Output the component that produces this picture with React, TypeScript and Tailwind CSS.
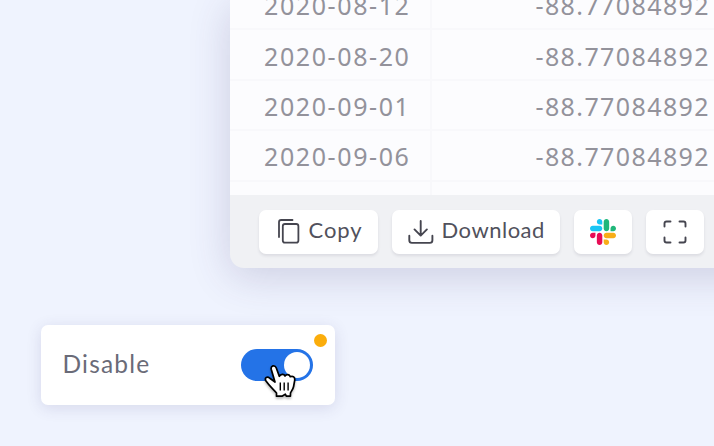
import React from "react";

const dates = ["2020-08-12", "2020-08-20", "2020-09-01", "2020-09-06"];

function CopyIcon() {
  return (
    <svg width="22" height="26" viewBox="0 0 22 26" fill="none" stroke="#45454f" strokeWidth="1.8" strokeLinecap="round">
      <path d="M1 18V3.2C1 1.9 1.9 1 3.2 1H14.5" />
      <rect x="4.8" y="5" width="15.6" height="18.6" rx="2.2" />
    </svg>
  );
}

function DownloadIcon() {
  return (
    <svg width="26" height="26" viewBox="0 0 26 26" fill="none" stroke="#45454f" strokeWidth="1.9" strokeLinecap="round" strokeLinejoin="round">
      <path d="M12.7 2V16M6.5 10.4L12.7 16.6L18.9 10.4M1.3 16.8V21.3C1.3 23 2.2 23.9 3.9 23.9H21.9C23.6 23.9 24.4 23 24.4 21.3V16.8" />
    </svg>
  );
}

function SlackIcon() {
  return (
    <svg width="26" height="26" viewBox="0 0 122.8 122.8">
      <path fill="#e70c55" d="M25.8 77.6c0 7.1-5.8 12.9-12.9 12.9S0 84.7 0 77.6s5.8-12.9 12.9-12.9h12.9v12.9zm6.5 0c0-7.1 5.8-12.9 12.9-12.9s12.9 5.8 12.9 12.9v32.3c0 7.1-5.8 12.9-12.9 12.9s-12.9-5.8-12.9-12.9V77.6z" />
      <path fill="#18c5f4" d="M45.2 25.8c-7.1 0-12.9-5.8-12.9-12.9S38.1 0 45.2 0s12.9 5.8 12.9 12.9v12.9H45.2zm0 6.5c7.1 0 12.9 5.8 12.9 12.9s-5.8 12.9-12.9 12.9H12.9C5.8 58.1 0 52.3 0 45.2s5.8-12.9 12.9-12.9h32.3z" />
      <path fill="#20b77a" d="M97 45.2c0-7.1 5.8-12.9 12.9-12.9s12.9 5.8 12.9 12.9-5.8 12.9-12.9 12.9H97V45.2zm-6.5 0c0 7.1-5.8 12.9-12.9 12.9s-12.9-5.8-12.9-12.9V12.9C64.7 5.8 70.5 0 77.6 0s12.9 5.8 12.9 12.9v32.3z" />
      <path fill="#f8ad18" d="M77.6 97c7.1 0 12.9 5.8 12.9 12.9s-5.8 12.9-12.9 12.9-12.9-5.8-12.9-12.9V97h12.9zm0-6.5c-7.1 0-12.9-5.8-12.9-12.9s5.8-12.9 12.9-12.9h32.3c7.1 0 12.9 5.8 12.9 12.9s-5.8 12.9-12.9 12.9H77.6z" />
    </svg>
  );
}

function ExpandIcon() {
  return (
    <svg width="24" height="24" viewBox="0 0 24 24" fill="none" stroke="#45454f" strokeWidth="1.9" strokeLinecap="round">
      <path d="M1.5 6.5V3.5Q1.5 1.5 3.5 1.5H7.5M16.5 1.5H20.5Q22.5 1.5 22.5 3.5V6.5M22.5 17.5V20.5Q22.5 22.5 20.5 22.5H16.5M7.5 22.5H3.5Q1.5 22.5 1.5 20.5V17.5" />
    </svg>
  );
}

function HandCursor() {
  return (
    <svg width="40" height="42" viewBox="0 0 40 42" className="absolute left-[20px] top-[11px] drop-shadow-[0_2px_1px_rgba(0,0,0,0.25)]">
      <path d="M14 22L10.3 9.5C9.4 5.6 13.8 4.4 15.2 7.8L18.3 16.3C19.6 14.1 23 13.6 24 16C25.6 13.8 28.4 14.3 29.3 16.7C32 15.6 34.1 17.3 33.7 20.3L32.6 26.5C32 29.5 30 31.5 29.5 33L29.4 36.2H25.3L24.3 34.2L21 36.2H15.5V33C12.5 29.5 8.4 26 5 21C3.1 17.5 6.3 16 8.8 18.2L14 22Z" fill="white" stroke="black" strokeWidth="1.7" strokeLinejoin="round" />
      <path d="M19.3 22.5V30.5M23.2 22.5V30.5M27.1 22.5V30.5" stroke="black" strokeWidth="1.4" />
    </svg>
  );
}

const button = "flex h-11 shrink-0 items-center rounded-[7px] bg-white shadow-[0_2px_3px_rgba(40,40,70,0.1)]";
const label = "font-['Lato',sans-serif] pb-[4px] text-[22px] leading-none text-[#51515c]";

export default function App() {
  return (
    <main className="h-[446px] w-[714px] overflow-hidden bg-[#eff3fe]">
      <section className="ml-[230px] h-[268px] w-[600px] overflow-hidden rounded-bl-[14px] bg-[#f0f1f4] shadow-[0_8px_42px_rgba(65,55,110,0.2)]">
        <div className="h-[195px] overflow-hidden bg-[#fcfcfe]">
          <div className="-mt-[20px]">
            {dates.map((date) => (
              <div key={date} className="flex h-[50.4px] border-b-2 border-[#f8f8fb] font-['Noto_Sans',sans-serif] text-[25px] leading-none text-[#93929b]">
                <div className="flex w-[202px] shrink-0 items-center border-r-2 border-[#f8f8fb] pl-[34px] pt-[3px] tracking-[1.6px]">{date}</div>
                <div className="flex w-[278px] items-center justify-end pt-[3px] tracking-[1.4px]">-88.77084892</div>
              </div>
            ))}
            <div className="h-10 w-[202px] border-r-2 border-[#f8f8fb]" />
          </div>
        </div>
        <div className="flex gap-[14px] pl-[28.5px] pt-[15px]">
          <button className={`${button} w-[119px] pl-[19px]`}>
            <CopyIcon />
            <span className={`${label} ml-[9px] tracking-[0.9px]`}>Copy</span>
          </button>
          <button className={`${button} w-[168px] pl-4`}>
            <DownloadIcon />
            <span className={`${label} ml-2 tracking-[0.5px]`}>Download</span>
          </button>
          <button aria-label="Slack" className={`${button} w-[58px] justify-center`}><SlackIcon /></button>
          <button aria-label="Expand" className={`${button} w-[58px] justify-center`}><ExpandIcon /></button>
          <div className={`${button} w-[58px]`} />
        </div>
      </section>
      <section className="relative ml-[40.5px] mt-[57px] flex h-20 w-[294px] items-center justify-between rounded-[7px] bg-white px-[22px] shadow-[0_3px_15px_rgba(65,55,120,0.14)]">
        <span className="font-['Lato',sans-serif] pb-[2px] text-[24.5px] leading-none tracking-[1.2px] text-[#6a6b78]">Disable</span>
        <span className="absolute right-[8px] top-[9px] size-[13px] rounded-full bg-[#fbad0b]" />
        <div className="relative flex h-8 w-[72px] items-center justify-end rounded-full bg-[#2473e7] pr-[3px]">
          <span className="size-[26px] rounded-full bg-white" />
          <HandCursor />
        </div>
      </section>
    </main>
  );
}
